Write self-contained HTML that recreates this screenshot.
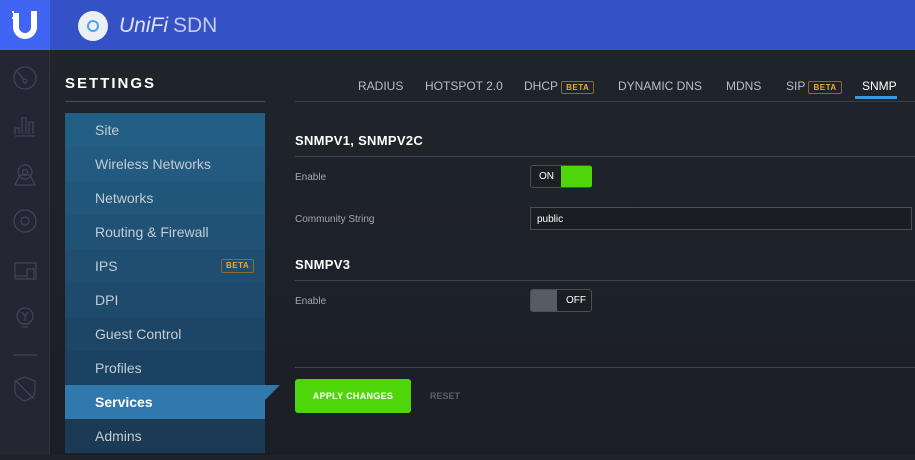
<!DOCTYPE html>
<html><head><meta charset="utf-8"><style>
*{margin:0;padding:0;box-sizing:border-box}
body{width:915px;height:455px;overflow:hidden;background:#1e2229;font-family:"Liberation Sans",sans-serif;position:relative}
.top{position:absolute;left:0;top:0;width:915px;height:50px;background:#3451c6}
.logo{position:absolute;left:0;top:0;width:50px;height:50px;background:#4165f3}
.rail{position:absolute;left:0;top:50px;width:50px;height:405px;background:#252534;border-right:1px solid #30303e}
.main{position:absolute;left:50px;top:50px;width:865px;height:405px;background:linear-gradient(180deg,#1f252b,#1b1f25)}
.abs{position:absolute}
.menu div{position:absolute;left:65px;width:200px;height:34px;color:#c5ccd3;font-size:14px;line-height:34px;padding-left:30px}
.beta{border:1px solid #8a6a2e;color:#f0a830;font-size:8px;font-weight:bold;border-radius:2px;padding:1px 4px;letter-spacing:.5px}
.tab{position:absolute;top:79px;font-size:12px;color:#b8bec6}
.lbl{position:absolute;left:295px;font-size:10px;color:#a3a9b0}
.h{position:absolute;left:295px;font-size:13px;font-weight:bold;color:#fff;letter-spacing:.3px}
.line{position:absolute;left:295px;right:0;height:1px;background:#41464d}
</style></head><body>
<div class="top"></div>
<div class="logo"><svg width="50" height="50" viewBox="0 0 50 50"><path d="M16 13v14a9 9 0 0 0 18 0V11" stroke="#fff" stroke-width="6" fill="none"/><rect x="12" y="11" width="2" height="2" fill="#fff"/><rect x="15" y="14" width="2" height="2" fill="#fff"/><rect x="12" y="17" width="2" height="2" fill="#fff"/></svg></div>
<div class="abs" style="left:78px;top:11px;width:30px;height:30px;border-radius:50%;background:#eceff3"></div>
<div class="abs" style="left:87px;top:20px;width:12px;height:12px;border-radius:50%;border:2px solid #4ca3f0"></div>
<div class="abs" style="left:119px;top:14px;font-size:21px;color:#dfe4f4;font-style:italic">UniFi</div>
<div class="abs" style="left:173px;top:14px;font-size:21px;color:#c5cce8">SDN</div>
<div class="rail">
<svg width="50" height="405" fill="none" stroke="#44445a" stroke-width="1.2">
<circle cx="25" cy="28" r="11"/><circle cx="25" cy="31" r="2"/><path d="M18 22l6 8"/>
<path d="M15 86h20M15 84v-6h4v6M22 84v-16h4v16M29 84v-12h4v12"/>
<path d="M15 135l5-10h10l5 10z"/><circle cx="25" cy="122" r="7"/><circle cx="25" cy="122" r="2.5"/>
<circle cx="25" cy="171" r="11"/><circle cx="25" cy="171" r="4"/>
<path d="M15 229v-16h21v16H15M15 226h11M27 229v-10h7v10"/>
<circle cx="25" cy="266" r="8"/><path d="M22 262l3 4 3-4M25 266v5M21 274h8M22 277h6"/>
<path d="M13 305h24"/>
<path d="M15 331l10-4 10 4v10c0 5-5 8-10 10-5-2-10-5-10-10z M16 331l18 18"/>
</svg></div>
<div class="main"></div>
<div class="abs" style="left:65px;top:75px;font-size:15px;font-weight:bold;color:#fff;letter-spacing:2px">SETTINGS</div>
<div class="abs" style="left:65px;top:101px;width:200px;height:1px;background:#4a4f56"></div>
<div class="abs" style="left:295px;top:101px;width:620px;height:1px;background:#3a3f46"></div>
<div class="menu">
<div style="top:113px;background:#235e85">Site</div>
<div style="top:147px;background:#225a80">Wireless Networks</div>
<div style="top:181px;background:#21567b">Networks</div>
<div style="top:215px;background:#205276">Routing &amp; Firewall</div>
<div style="top:249px;background:#1f4e71">IPS<span class="beta" style="position:absolute;left:156px;top:10px;line-height:10px">BETA</span></div>
<div style="top:283px;background:#1e4a6b">DPI</div>
<div style="top:317px;background:#1d4666">Guest Control</div>
<div style="top:351px;background:#1c4261">Profiles</div>
<div style="top:385px;background:#2f79ad;color:#fff;font-weight:bold">Services</div>
<div style="top:419px;background:#1a3a55">Admins</div>
</div>
<svg class="abs" style="left:265px;top:385px" width="15" height="16"><path d="M0 0H15L0 15z" fill="#2f79ad"/></svg>
<div class="tab" style="left:358px">RADIUS</div>
<div class="tab" style="left:425px">HOTSPOT 2.0</div>
<div class="tab" style="left:524px">DHCP <span class="beta">BETA</span></div>
<div class="tab" style="left:618px">DYNAMIC DNS</div>
<div class="tab" style="left:726px">MDNS</div>
<div class="tab" style="left:786px">SIP <span class="beta">BETA</span></div>
<div class="tab" style="left:862px;color:#fff">SNMP</div>
<div class="abs" style="left:855px;top:96px;width:42px;height:3px;background:#3a98de"></div>
<div class="h" style="top:133px">SNMPV1, SNMPV2C</div>
<div class="line" style="top:156px"></div>
<div class="lbl" style="top:172px">Enable</div>
<div class="abs" style="left:530px;top:165px;width:62px;height:23px;border:1px solid #4a5058;border-radius:3px;background:#1b1f24"><span style="position:absolute;left:8px;top:5px;font-size:10px;color:#fff">ON</span><div style="position:absolute;left:30px;top:0;width:31px;height:21px;background:#4fd60b;border-radius:0 2px 2px 0"></div></div>
<div class="lbl" style="top:214px">Community String</div>
<div class="abs" style="left:530px;top:207px;width:382px;height:23px;border:1px solid #4a5058;background:#1a1e23;color:#fff;font-size:10px;padding:6px 6px">public</div>
<div class="h" style="top:257px">SNMPV3</div>
<div class="line" style="top:280px"></div>
<div class="lbl" style="top:296px">Enable</div>
<div class="abs" style="left:530px;top:289px;width:62px;height:23px;border:1px solid #4a5058;border-radius:3px;background:#1b1f24;overflow:hidden"><div style="position:absolute;left:0;top:0;width:26px;height:21px;background:#575b63"></div><span style="position:absolute;left:35px;top:5px;font-size:10px;color:#fff">OFF</span></div>
<div class="line" style="top:367px"></div>
<div class="abs" style="left:295px;top:379px;width:116px;height:34px;background:#4fd60b;border-radius:3px;color:#fff;font-size:9px;font-weight:bold;text-align:center;line-height:34px;letter-spacing:.3px">APPLY CHANGES</div>
<div class="abs" style="left:430px;top:391px;font-size:9px;color:#5a6068;font-weight:bold">RESET</div>
</body></html>
